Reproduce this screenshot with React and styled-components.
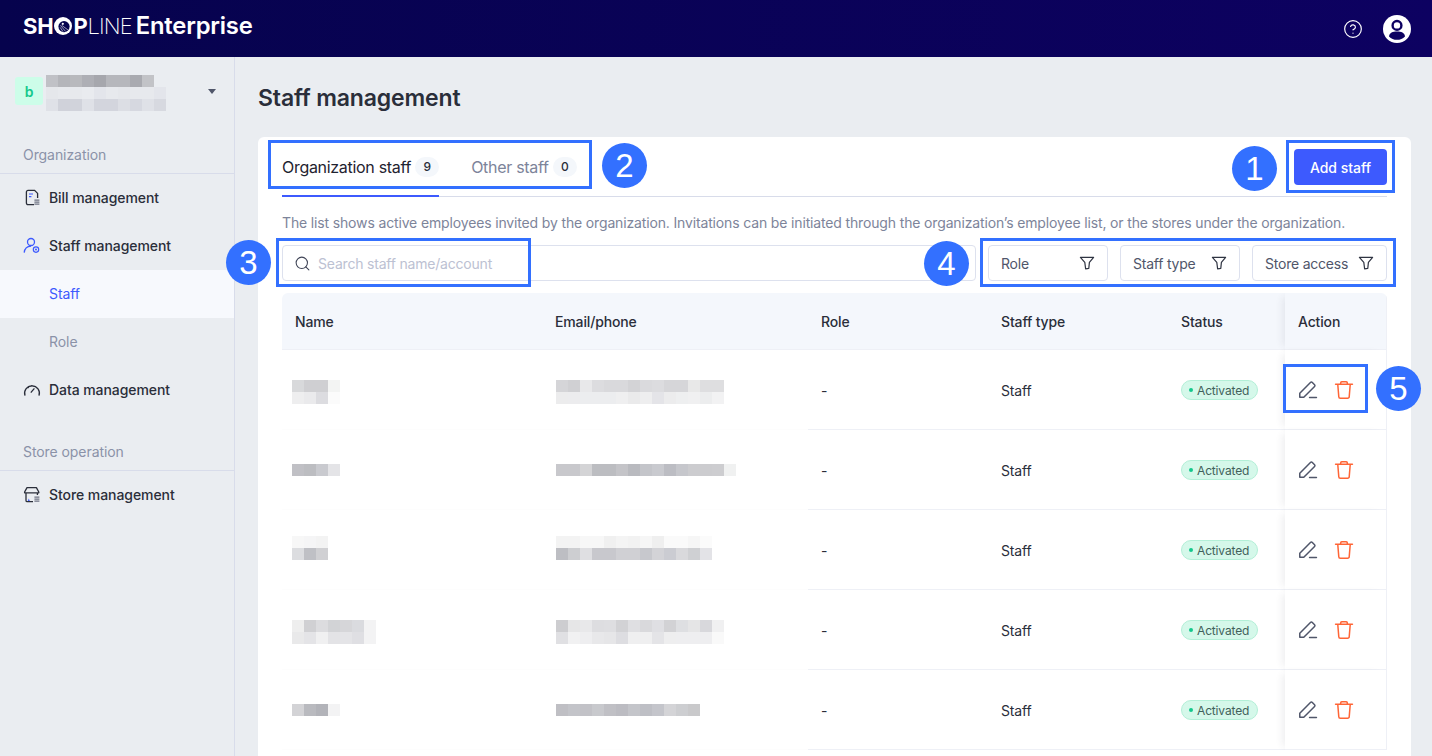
import React from 'react'
import styled, { createGlobalStyle } from 'styled-components'
import { Search, CircleHelp } from 'lucide-react'

const GlobalStyle = createGlobalStyle`
  * { box-sizing: border-box; }
  html, body { margin: 0; padding: 0; height: 100%; overflow: hidden; }
  body {
    font-family: Inter, "Liberation Sans", sans-serif;
    letter-spacing: -0.15px;
    color: #2a2e3a;
    background: #eaedf1;
  }
`

const Page = styled.div`
  position: relative;
  width: 1432px;
  height: 756px;
  overflow: hidden;
  display: flex;
  flex-direction: column;
`

const Header = styled.header`
  height: 57px;
  flex: none;
  padding: 0 21px 0 23px;
  display: flex;
  align-items: center;
  justify-content: space-between;
  background: linear-gradient(90deg, #06034d, #0d0161);
`

const Logo = styled.div`
  display: flex;
  align-items: center;
  padding-bottom: 5px;
  color: #fff;
  font-size: 22px;
  line-height: 26px;
`

const LogoBold = styled.span`
  font-weight: 700;
  letter-spacing: -0.2px;
`

const LogoThin = styled.span`
  font-weight: 200;
  letter-spacing: -0.9px;
`

const LogoSuffix = styled.span`
  font-weight: 600;
  margin-left: 4px;
  font-size: 23.8px;
  letter-spacing: -0.2px;
`

const HeaderActions = styled.div`
  display: flex;
  align-items: center;
  gap: 20px;
  color: #fff;
`

const Body = styled.div`
  flex: 1;
  display: flex;
  min-height: 0;
`

const Sidebar = styled.aside`
  width: 235px;
  flex: none;
  border-right: 1px solid #d8dcea;
`

const Account = styled.div`
  height: 80px;
  padding: 18px 18px 0 15px;
  display: flex;
  gap: 3px;
`

const AccountBadge = styled.div`
  width: 28px;
  height: 28px;
  margin-top: 2px;
  flex: none;
  border-radius: 3px;
  background: #cdfde9;
  color: #14c88c;
  font-size: 14px;
  font-weight: 600;
  display: flex;
  align-items: center;
  justify-content: center;
`

const Caret = styled.div`
  margin: 14px 0 0 39px;
  width: 0;
  height: 0;
  border-left: 4.5px solid transparent;
  border-right: 4.5px solid transparent;
  border-top: 5px solid #50566a;
`

const NavLabel = styled.div`
  height: 37px;
  padding: 9px 23px 0;
  margin-top: ${p => p.$gap || 0}px;
  font-size: 14px;
  line-height: 17px;
  letter-spacing: -0.07px;
  color: #8a92a8;
  border-bottom: 1px solid #d8dcea;
`

const NavItem = styled.div`
  height: 48px;
  padding: 0 0 1px ${p => (p.$sub ? 49 : 23)}px;
  display: flex;
  align-items: center;
  gap: 8px;
  font-size: 14px;
  letter-spacing: -0.07px;
  font-weight: ${p => (p.$sub ? 400 : 500)};
  color: ${p => (p.$active ? '#3d5afe' : p.$sub ? '#8a92a8' : '#2a2e3a')};
  background: ${p => (p.$active ? '#f7f9fd' : 'transparent')};
`

const Main = styled.main`
  flex: 1;
  min-width: 0;
  padding: 25px 21px 0 23px;
`

const Title = styled.h1`
  margin: 0 0 23px;
  font-size: 23px;
  line-height: 32px;
  letter-spacing: -0.15px;
  font-weight: 600;
  color: #2a2e3a;
`

const Card = styled.section`
  background: #fff;
  border-radius: 6px;
  padding: 0 24px;
  height: 700px;
`

const TabBar = styled.div`
  height: 60px;
  border-bottom: 1px solid #d8dcea;
  display: flex;
  align-items: flex-start;
  justify-content: space-between;
`

const Tabs = styled.div`
  display: flex;
  gap: 32px;
`

const Tab = styled.div`
  height: 60px;
  margin-bottom: -1px;
  padding-top: 20px;
  display: flex;
  align-items: flex-start;
  gap: 4px;
  font-size: 16px;
  line-height: 20px;
  letter-spacing: -0.3px;
  color: ${p => (p.$active ? '#1f2330' : '#7d849a')};
  border-bottom: 2px solid ${p => (p.$active ? '#3d5afe' : 'transparent')};
`

const TabCount = styled.span`
  min-width: 24px;
  height: 20px;
  padding: 0 4px;
  border-radius: 10px;
  background: #f4f7fb;
  color: #2a2e3a;
  font-size: 12px;
  font-weight: 500;
  display: flex;
  align-items: center;
  justify-content: center;
`

const PrimaryButton = styled.button`
  margin-top: 12px;
  width: 93px;
  height: 36px;
  border: 0;
  border-radius: 4px;
  background: #3d5afe;
  color: #fff;
  font: 500 14px Inter, "Liberation Sans", sans-serif;
`

const Hint = styled.p`
  margin: 17px 0 14px;
  font-size: 14px;
  line-height: 17px;
  letter-spacing: -0.15px;
  color: #7d849a;
  white-space: nowrap;
`

const Toolbar = styled.div`
  display: flex;
  gap: 12px;
  margin-bottom: 12px;
`

const SearchBox = styled.div`
  flex: 1;
  height: 36px;
  padding: 0 11px;
  border: 1px solid #dde1ee;
  border-radius: 4px;
  display: flex;
  align-items: center;
  gap: 7px;
  color: #3f4456;
  font-size: 14px;
  letter-spacing: -0.2px;
`

const Placeholder = styled.span`
  color: #bcc1d2;
`

const FilterButton = styled.div`
  width: ${p => p.$width}px;
  height: 36px;
  padding: 0 12px;
  border: 1px solid #dde1ee;
  border-radius: 4px;
  display: flex;
  align-items: center;
  justify-content: space-between;
  font-size: 14px;
  letter-spacing: -0.22px;
  color: #50566a;
`

const Table = styled.div`
  border-top-left-radius: 6px;
  border-top-right-radius: 6px;
  overflow: hidden;
`

const Row = styled.div`
  display: grid;
  grid-template-columns: 260px 266px 180px 180px 117px 102px;
  height: ${p => (p.$head ? 57 : 80)}px;
`

const Cell = styled.div`
  padding: 1px 13px 0;
  display: flex;
  align-items: center;
  font-size: 14px;
  font-weight: ${p => (p.$head ? 500 : 400)};
  color: #2a2e3a;
  background: ${p => (p.$head ? '#f4f7fc' : '#fff')};
  border-bottom: 1px solid ${p => (p.$masked ? '#fdfdfd' : '#eef0f6')};
`

const NameCell = styled(Cell)`
  padding-left: ${p => (p.$head ? 13 : 10)}px;
`

const EmailCell = styled(Cell)`
  padding-left: ${p => (p.$head ? 13 : 14)}px;
`

const ActionCell = styled(Cell)`
  position: relative;
  gap: 16px;
  border-right: 1px solid #eef0f6;
  box-shadow: -6px 0 8px -4px rgba(40, 45, 70, 0.09);
`

const MosaicSlot = styled.div`
  margin-top: ${p => p.$nudge || 0}px;
`

const Status = styled.span`
  width: 77px;
  height: 20px;
  border: 1px solid #b3efd7;
  border-radius: 10px;
  background: #d5f8ea;
  color: #41615a;
  font-size: 12px;
  display: flex;
  align-items: center;
  gap: 4px;
  padding-left: 7px;
  &::before {
    content: '';
    width: 4px;
    height: 4px;
    border-radius: 50%;
    background: #14c88c;
  }
`

const Frame = styled.div`
  position: absolute;
  left: ${p => p.$x}px;
  top: ${p => p.$y}px;
  width: ${p => p.$w}px;
  height: ${p => p.$h}px;
  border: 3px solid #3370ff;
`

const Marker = styled.div`
  position: absolute;
  left: ${p => p.$x}px;
  top: ${p => p.$y}px;
  width: 45px;
  height: 45px;
  border-radius: 50%;
  background: #3370ff;
  color: #fff;
  font: 33px/45px "Liberation Sans", sans-serif;
  letter-spacing: 0;
  text-align: center;
`

// pixelated (redacted) text, drawn from the sampled colours
function Mosaic({ rows }) {
  const cols = Math.max(...rows.map(r => r.length))
  return (
    <svg width={cols * 12} height={rows.length * 12} style={{ display: 'block' }}>
      {rows.map((r, y) =>
        r.map((c, x) => <rect key={x + '-' + y} x={x * 12} y={y * 12} width="12" height="12" fill={'#' + c} />)
      )}
    </svg>
  )
}

const LogoO = () => (
  <svg width="18" height="18" viewBox="0 0 18 18" style={{ margin: '0 1px' }}>
    <circle cx="9" cy="9" r="9" fill="#fff" />
    <circle cx="10" cy="9.6" r="5.6" fill="#06034d" />
    <circle cx="8.8" cy="6.8" r="1.1" fill="#fff" />
    <path d="M6.4 8.4L11.6 14.4M7.6 8.2L14 13M6.2 10.4L9 14.6" stroke="#fff" strokeWidth=".6" />
  </svg>
)

const BillIcon = () => (
  <svg width="18" height="18" viewBox="0 0 18 18" fill="none">
    <path d="M11 15.7H5a1.6 1.6 0 0 1-1.6-1.6V3A1.6 1.6 0 0 1 5 1.4h6.6L14.6 4.4V9" stroke="#2a2e3a" strokeWidth="1.3" />
    <path d="M6 5h4M6 7.6h2.4" stroke="#3d5afe" strokeWidth="1.2" />
    <path d="M11.4 10.4h5v1.3h-5zM11.4 12.4h5v1.3h-5zM11.4 14.4h5v1.3h-5z" fill="#6d7282" />
  </svg>
)

const StaffIcon = () => (
  <svg width="18" height="18" viewBox="0 0 18 18" fill="none" stroke="#3d5afe">
    <circle cx="8" cy="5" r="3.5" strokeWidth="1.3" />
    <path d="M1.2 15.6C1.6 11.6 4.3 9.4 8 9.2" strokeWidth="1.3" />
    <circle cx="13" cy="12.6" r="2.7" strokeWidth="1.2" />
    <circle cx="13" cy="12.6" r="1" fill="#3d5afe" stroke="none" />
  </svg>
)

const DataIcon = () => (
  <svg width="18" height="18" viewBox="0 0 18 18" fill="none" stroke="#2a2e3a" strokeWidth="1.3">
    <path d="M2 14.6A7.4 7.4 0 1 1 16 14.6" />
    <path d="M8.2 11.2L11 7.8" strokeLinecap="round" />
    <path d="M5.4 6.6h.1M8.8 4.6h.1" strokeLinecap="round" />
  </svg>
)

const StoreIcon = () => (
  <svg width="18" height="18" viewBox="0 0 18 18" fill="none">
    <path d="M4 1.6h9.4L15.8 6v.8H1.6V6z" stroke="#2a2e3a" strokeWidth="1.3" strokeLinejoin="round" />
    <path d="M3 7v7.4a1.2 1.2 0 0 0 1.2 1.2H10M14.4 7v2" stroke="#2a2e3a" strokeWidth="1.3" />
    <path d="M4.8 15l1-2.6 1 2.6z" fill="#3d5afe" />
    <path d="M11.4 10.4h5v1.3h-5zM11.4 12.4h5v1.3h-5zM11.4 14.4h5v1.3h-5z" fill="#6d7282" />
  </svg>
)

const FunnelIcon = () => (
  <svg width="16" height="16" viewBox="0 0 16 16" fill="none" stroke="#2f3442" strokeWidth="1.2" strokeLinejoin="round">
    <path d="M1.4 2.4h13.2L10.4 7.4 9.8 13.4 6.6 13.8 5.8 7.4z" />
  </svg>
)

const EditIcon = () => (
  <svg width="20" height="20" viewBox="0 0 18 18" fill="none" stroke="#50566a" strokeWidth="1.35" strokeLinejoin="round">
    <path d="M1.6 15.6V12L11.2 2.2a1.2 1.2 0 0 1 1.7 0l2 2a1.2 1.2 0 0 1 0 1.7L5.2 15.6z" />
    <path d="M10.4 15.8h6.2" strokeLinecap="round" />
  </svg>
)

const TrashIcon = () => (
  <svg width="20" height="20" viewBox="0 0 18 18" fill="none" stroke="#ff6536" strokeWidth="1.35" strokeLinejoin="round">
    <path d="M1.4 3.8h15.2" strokeLinecap="round" />
    <path d="M6 3.6V2.6a1 1 0 0 1 1-1h4a1 1 0 0 1 1 1v1" />
    <path d="M3.4 4l.9 11a1.4 1.4 0 0 0 1.4 1.4h6.6a1.4 1.4 0 0 0 1.4-1.4l.9-11" />
  </svg>
)

const AvatarIcon = () => (
  <svg width="28" height="28" viewBox="0 0 28 28">
    <circle cx="14" cy="14" r="14" fill="#fff" />
    <circle cx="14" cy="10.4" r="4.4" fill="none" stroke="#0d0161" strokeWidth="2.4" />
    <path d="M6 21.4C6.6 17.8 9.6 16.6 14 16.6s7.4 1.2 8 4.8A11 11 0 0 1 6 21.4z" fill="#0d0161" />
  </svg>
)

const accountRows = [
  ['c0c1c6', 'b4b5ba', 'b8b9bd', 'aeafb5', 'a6a7ad', 'b6b7bc', 'b6b7bc', 'a9aab0', 'c2c3c7'],
  ['e5e7eb', 'e7e9ed', 'e7e9ed', 'e9ebef', 'e3e5eb', 'e7e9ed', 'e5e7eb', 'e7e9ed', 'e7e9ed', 'e3e5eb'],
  ['dfe1e7', 'd0d2da', 'd1d3db', 'dfe1e7', 'd3d5dd', 'd3d5dd', 'dcdee4', 'd6d8e0', 'dfe1e7', 'd7d9e0'],
]

const staff = [
  {
    nudge: 4,
    name: [
      ['d8d9db', 'cfcfd2', 'cfcfd2', 'f3f4f3'],
      ['eeeeef', 'eaeaec', 'dcdce0', 'fbfbfb'],
    ],
    email: [
      ['d5d5d8', 'd0d0d3', 'e8e8ea', 'dcdcdf', 'd9d9dc', 'd9d9dc', 'd3d3d6', 'dadadd', 'dcdcdf', 'd6d6d9', 'd6d6d9', 'e8e8e8', 'dedee0', 'dedee0'],
      ['ececed', 'ececee', 'ecedef', 'ecedef', 'ecedef', 'efeff0', 'eaeaeb', 'eeeeef', 'e4e4e8', 'ececed', 'eeeff0', 'f0f0f1', 'ecedee', 'f2f2f3'],
    ],
  },
  {
    name: [['c0c0c5', 'bcbdc1', 'c9cacf', 'e4e4e7']],
    email: [['c8c8cc', 'c8c8cc', 'd4d4d6', 'bcbdc1', 'bcbdc1', 'c4c4c8', 'b9babf', 'c4c5ca', 'c9cacf', 'bcbdc3', 'c6c7cc', 'cccccf', 'cccccf', 'cdcdd0', 'f0f1f1']],
  },
  {
    nudge: -4,
    name: [
      ['f7f7f7', 'f5f5f6', 'f3f3f3'],
      ['dcdde0', 'bfc0c5', 'd0d0d3'],
    ],
    email: [
      ['f3f3f3', 'f3f3f3', 'f7f7f7', 'f7f7f7', 'f0f0f0', 'f4f4f4', 'f2f2f2', 'f6f6f6', 'efefef', 'fafafa', 'fafafa', 'f6f6f6', 'fbfbfb'],
      ['bdbec3', 'cdced1', 'dfdfe2', 'c8c8cd', 'c8c8cd', 'd0d0d4', 'd0d0d4', 'c7c8cd', 'd3d3d7', 'cbccd2', 'd9d9dc', 'cfd0d3', 'e3e3e7'],
    ],
  },
  {
    nudge: 4,
    name: [
      ['eeeeee', 'd0d0d3', 'dcdcdf', 'd2d3d6', 'd6d6d9', 'dadbdf', 'f3f3f4'],
      ['e9e9ea', 'e4e4e7', 'f0f0f1', 'e3e3e6', 'e4e4e7', 'dfdfe3', 'f3f3f4'],
    ],
    email: [
      ['cdcdd0', 'e6e6e7', 'e8e8ea', 'dddde0', 'dedee1', 'd2d2d5', 'dfdfe2', 'd9d9dc', 'dfdfe3', 'd2d2d5', 'dedfe2', 'e5e5e6', 'd8d8dc', 'f0f0f1'],
      ['e0e0e3', 'f1f1f2', 'eeeef0', 'e8e8ea', 'e6e6e8', 'dddde1', 'efeff0', 'efeff0', 'e4e4e7', 'eeeeef', 'eeeef0', 'eeeef0', 'eeeef0', 'f9f9f9'],
    ],
  },
  {
    name: [['d3d3d6', 'b9babf', 'b2b3b9', 'f3f3f4']],
    email: [['bfbfc4', 'c3c4c9', 'c2c2c7', 'c8c9cd', 'c0c0c5', 'bcbcc2', 'c4c5ca', 'bebfc5', 'c4c5cb', 'd4d4d7', 'cdced1', 'c9c9cb']],
  },
]

const frames = [
  { x: 1286, y: 140, w: 109, h: 53 },
  { x: 268, y: 140, w: 324, h: 49 },
  { x: 276, y: 238, w: 255, h: 49 },
  { x: 980, y: 238, w: 416, h: 49 },
  { x: 1283, y: 364, w: 85, h: 49 },
]

const markers = [
  { n: 1, x: 1232, y: 146 },
  { n: 2, x: 602, y: 143 },
  { n: 3, x: 226, y: 240 },
  { n: 4, x: 924, y: 241 },
  { n: 5, x: 1376, y: 366 },
]

export default function App() {
  return (
    <Page>
      <GlobalStyle />
      <Header>
        <Logo>
          <LogoBold>SH</LogoBold>
          <LogoO />
          <LogoBold>P</LogoBold>
          <LogoThin>LINE</LogoThin>
          <LogoSuffix>Enterprise</LogoSuffix>
        </Logo>
        <HeaderActions>
          <CircleHelp size={20} strokeWidth={1.4} />
          <AvatarIcon />
        </HeaderActions>
      </Header>
      <Body>
        <Sidebar>
          <Account>
            <AccountBadge>b</AccountBadge>
            <Mosaic rows={accountRows} />
            <Caret />
          </Account>
          <NavLabel>Organization</NavLabel>
          <NavItem><BillIcon />Bill management</NavItem>
          <NavItem><StaffIcon />Staff management</NavItem>
          <NavItem $sub $active>Staff</NavItem>
          <NavItem $sub>Role</NavItem>
          <NavItem><DataIcon />Data management</NavItem>
          <NavLabel $gap={20}>Store operation</NavLabel>
          <NavItem><StoreIcon />Store management</NavItem>
        </Sidebar>
        <Main>
          <Title>Staff management</Title>
          <Card>
            <TabBar>
              <Tabs>
                <Tab $active>Organization staff <TabCount>9</TabCount></Tab>
                <Tab>Other staff <TabCount>0</TabCount></Tab>
              </Tabs>
              <PrimaryButton>Add staff</PrimaryButton>
            </TabBar>
            <Hint>The list shows active employees invited by the organization. Invitations can be initiated through the organization’s employee list, or the stores under the organization.</Hint>
            <Toolbar>
              <SearchBox>
                <Search size={17} strokeWidth={1.5} />
                <Placeholder>Search staff name/account</Placeholder>
              </SearchBox>
              <FilterButton $width={120}>Role <FunnelIcon /></FilterButton>
              <FilterButton $width={120}>Staff type <FunnelIcon /></FilterButton>
              <FilterButton $width={135}>Store access <FunnelIcon /></FilterButton>
            </Toolbar>
            <Table>
              <Row $head>
                <NameCell $head>Name</NameCell>
                <EmailCell $head>Email/phone</EmailCell>
                <Cell $head>Role</Cell>
                <Cell $head>Staff type</Cell>
                <Cell $head>Status</Cell>
                <ActionCell $head>Action</ActionCell>
              </Row>
              {staff.map((s, i) => (
                <Row key={i}>
                  <NameCell $masked><MosaicSlot $nudge={s.nudge}><Mosaic rows={s.name} /></MosaicSlot></NameCell>
                  <EmailCell $masked><MosaicSlot $nudge={s.nudge}><Mosaic rows={s.email} /></MosaicSlot></EmailCell>
                  <Cell>-</Cell>
                  <Cell>Staff</Cell>
                  <Cell><Status>Activated</Status></Cell>
                  <ActionCell><EditIcon /><TrashIcon /></ActionCell>
                </Row>
              ))}
            </Table>
          </Card>
        </Main>
      </Body>
      {frames.map((f, i) => (
        <Frame key={i} $x={f.x} $y={f.y} $w={f.w} $h={f.h} />
      ))}
      {markers.map(m => (
        <Marker key={m.n} $x={m.x} $y={m.y}>{m.n}</Marker>
      ))}
    </Page>
  )
}
